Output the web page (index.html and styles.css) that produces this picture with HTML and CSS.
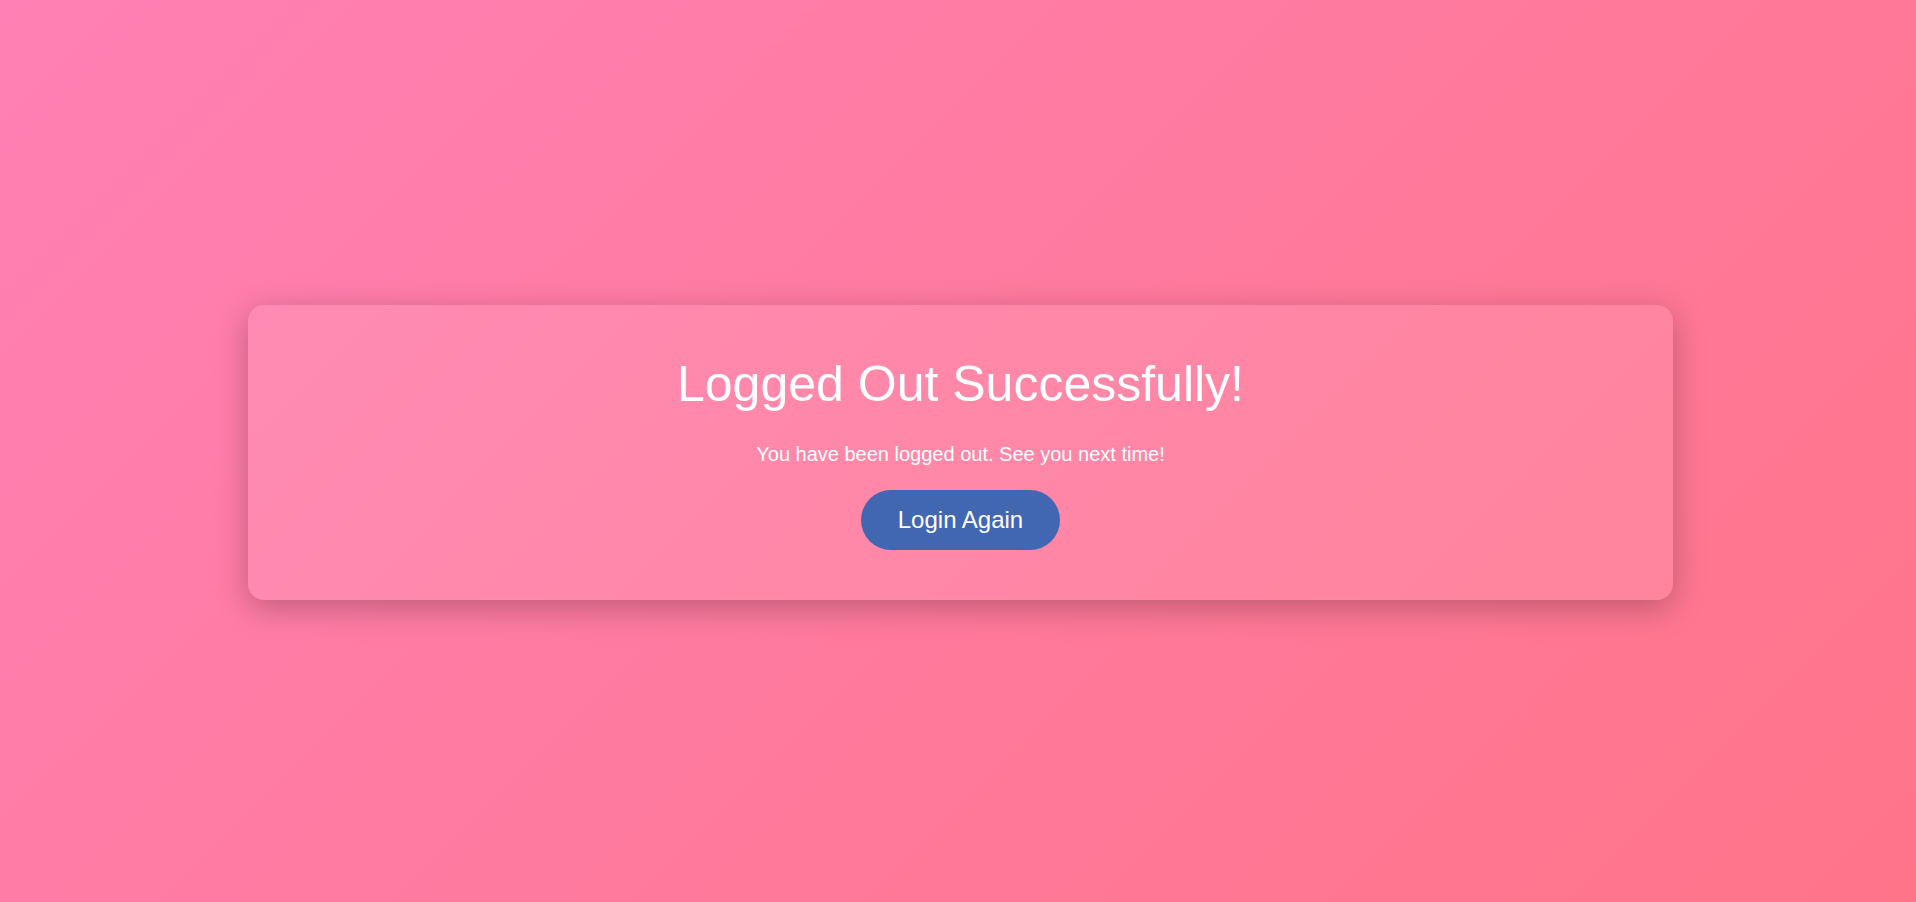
FILE: index.html
```html
<!DOCTYPE html>
<html lang="en">
<head>
<meta charset="utf-8">
<title>Logged Out</title>
<link rel="stylesheet" href="styles.css">
</head>
<body>
<main class="page">
  <section class="card">
    <h1 class="title">Logged Out Successfully!</h1>
    <p class="message">You have been logged out. See you next time!</p>
    <a class="btn" href="#">Login Again</a>
  </section>
</main>
</body>
</html>
```

FILE: styles.css
```css
html, body {
  margin: 0;
  padding: 0;
  height: 100%;
}
body {
  font-family: "Liberation Sans", Arial, sans-serif;
  background: linear-gradient(135deg, #ff80b4 0%, #ff7489 100%);
  color: #fff;
  overflow: hidden;
}
.page {
  height: 902px;
  display: flex;
  align-items: center;
  justify-content: center;
  padding-left: 5px;
  padding-top: 3px;
  box-sizing: border-box;
}
.card {
  width: 1425px;
  box-sizing: border-box;
  padding: 51px 40px 50px;
  background: rgba(255, 255, 255, 0.1);
  border-radius: 16px;
  box-shadow: 0 8px 32px rgba(0, 0, 0, 0.25);
  text-align: center;
  display: flex;
  flex-direction: column;
  align-items: center;
}
.title {
  margin: 0;
  font-size: 50px;
  font-weight: normal;
  line-height: 57px;
}
.message {
  margin: 30px 0 24px;
  font-size: 20px;
  line-height: 23px;
}
.btn {
  display: inline-block;
  background: #4267b2;
  color: #fff;
  text-decoration: none;
  font-size: 24px;
  line-height: 28px;
  padding: 16px 37px;
  border-radius: 30px;
}
```
